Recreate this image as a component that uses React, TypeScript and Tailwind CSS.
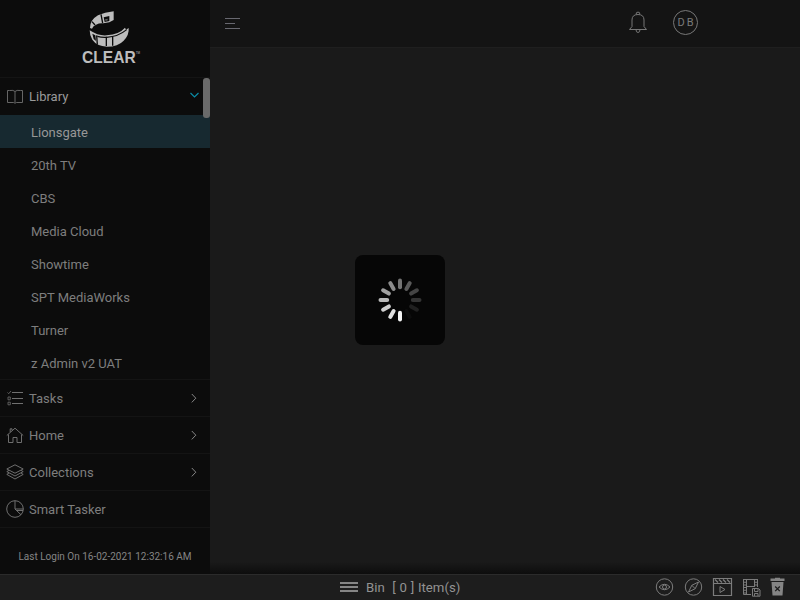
import React from 'react';

const channels = ['Lionsgate', '20th TV', 'CBS', 'Media Cloud', 'Showtime', 'SPT MediaWorks', 'Turner', 'z Admin v2 UAT'];

const spokes = ['#747474', '#5a5a5a', '#454545', '#343434', '#202020', '#0d0d0d', '#f5f5f5', '#e0e0e0', '#cecece', '#b9b9b9', '#a0a0a0', '#8b8b8b'];

function Logo() {
  return (
    <svg className="h-20 w-20" viewBox="0 0 240 240" fill="#bdbdbd">
      <path d="M131 34 Q104 37 84 46 Q60 60 60 84 L66 86 Q68 78 78 74 Q88 69 100 70 L118 67 L131 60Z" />
      <path d="M59 91 Q70 98 82 103 Q96 107 110 106 Q148 103 165 83 L168 89 L176 84 Q178 105 161 122 Q144 140 111 140 Q80 138 67 119 Q59 107 59 91Z" />
      <g fill="none" stroke="#0c0c0c" strokeWidth="4">
        <path d="M93 43 L98 69 M66 65 L75 75" />
        <path d="M80 106 L82 134 M109 110 V138 M128 110 V137" />
        <path d="M82 109 Q95 113 110 112 Q145 110 170 89" strokeWidth="3.5" />
      </g>
      <path d="M101 52 L118 48 V63 L104 66Z M67 101 L76 106 L78 123 L71 117Z" fill="#0c0c0c" />
      <path d="M105 58 L113 56 V61 L107 63Z" fill="#606060" />
      <text x="36" y="189" fontFamily="Liberation Sans, Arial, sans-serif" fontWeight="700" fontSize="47" textLength="161" lengthAdjust="spacingAndGlyphs">CLEAR</text>
      <text x="197" y="161" fontFamily="Liberation Sans, Arial, sans-serif" fontSize="9">TM</text>
    </svg>
  );
}

const iconClass = 'relative -top-px ml-1.5 h-[18px] w-[18px] shrink-0';

function BookIcon() {
  return (
    <svg className={iconClass} viewBox="0 0 18 18" fill="none" stroke="#6c6c6c">
      <path d="M9 4.5V15.5 M9 4.5Q7.5 2.8 3.5 3.5H1.5V15.5H7.5L9 16.2L10.5 15.5H16.5V3.5H14.5Q10.5 2.8 9 4.5" strokeWidth=".95" />
    </svg>
  );
}

function TasksIcon() {
  return (
    <svg className={iconClass} viewBox="0 0 18 18" fill="none" stroke="#707070">
      <path d="M6 3.5H17M6 9.5H17M6 14.5H17" strokeWidth="1.2" />
      <path d="M1.5 3.5L2.7 4.7L5 2M2 8H4.3V10.8H2ZM2 13.2H4.3V15.8H2Z" strokeWidth=".8" />
    </svg>
  );
}

function HomeIcon() {
  return (
    <svg className={iconClass} viewBox="0 0 18 18" fill="none" stroke="#747474" strokeWidth=".95">
      <path d="M.8 9.5L9 2.2L17.2 9.5 M2.5 8.5V16.5H7V11.5H11V16.5H15.5V8.5 M4.2 6V2.8H6V4.4" />
    </svg>
  );
}

function LayersIcon() {
  return (
    <svg className={iconClass} viewBox="0 0 18 18" fill="none" stroke="#747474" strokeWidth=".95" strokeLinejoin="round">
      <path d="M9 1.8L17.2 6L9 10.2L.8 6Z M3 7.4L.8 8.6L9 13L17.2 8.6L15 7.4 M3 10L.8 11.4L9 16L17.2 11.4L15 10" />
    </svg>
  );
}

function PieIcon() {
  return (
    <svg className={iconClass} viewBox="0 0 18 18" fill="none" stroke="#747474" strokeWidth=".95">
      <circle cx="9" cy="9" r="8.3" />
      <path d="M9 .8V9H17.2 M9 9L15 14.8 M11 10.5H17" />
    </svg>
  );
}

function Chevron({ open = false }: { open?: boolean }) {
  return open ? (
    <svg className="relative -top-px mr-2.5 ml-auto h-3 w-3" viewBox="0 0 12 12" fill="none" stroke="#0b8ba5" strokeWidth="1.15">
      <path d="M2.5 3L6.5 7L10.5 3" />
    </svg>
  ) : (
    <svg className="relative -top-px mr-2.5 ml-auto h-3 w-3" viewBox="0 0 12 12" fill="none" stroke="#8c8c8c" strokeWidth=".95">
      <path d="M3.8 2L7.8 6.2L3.8 10.4" />
    </svg>
  );
}

function Row({ icon, label, arrow = true }: { icon: React.ReactNode; label: string; arrow?: boolean }) {
  return (
    <li className="flex h-[37px] items-center border-b border-[#141414] pt-0.5">
      {icon}
      <span className="ml-[5px]">{label}</span>
      {arrow && <Chevron />}
    </li>
  );
}

function Sidebar() {
  return (
    <aside className="relative flex w-[210px] shrink-0 flex-col bg-[#0c0c0c] text-[13px] leading-4 text-[#7e7e7e]">
      <div className="flex h-[78px] justify-center border-b border-[#141414] pl-2.5"><Logo /></div>
      <div className="flex h-[37px] items-center text-[#9a9a9a]">
        <BookIcon />
        <span className="ml-[5px]">Library</span>
        <Chevron open />
      </div>
      <ul>
        {channels.map((name, i) => (
          <li key={name} className={`flex h-[33px] items-center pt-0.5 pl-[31px] ${i === 0 ? 'bg-[#172930] text-[#979797]' : ''}`}>{name}</li>
        ))}
      </ul>
      <ul className="border-t border-[#141414]">
        <Row icon={<TasksIcon />} label="Tasks" />
        <Row icon={<HomeIcon />} label="Home" />
        <Row icon={<LayersIcon />} label="Collections" />
        <Row icon={<PieIcon />} label="Smart Tasker" arrow={false} />
      </ul>
      <p className="pt-[21px] text-center text-[10px] text-[#858585]">Last Login On 16-02-2021 12:32:16 AM</p>
      <div className="absolute top-[78px] right-0 h-10 w-[7px] rounded-[3px] bg-[#6a6a6a]" />
    </aside>
  );
}

function Header() {
  return (
    <header className="flex h-12 border-b border-[#1f1f1f] bg-[#141414]">
      <div className="mt-[18px] ml-[15px] flex flex-col gap-1">
        <i className="h-px w-[15px] bg-[#686870]" />
        <i className="h-px w-2.5 bg-[#686870]" />
        <i className="h-px w-[15px] bg-[#686870]" />
      </div>
      <div className="mr-[102px] ml-auto flex gap-[25px]">
        <svg className="mt-2.5 h-6 w-5" viewBox="0 0 20 24" fill="none" stroke="#777" strokeWidth="1">
          <path d="M1.5 19.5H18.5L16 16.5V10Q16 4.5 10 4.5Q4 4.5 4 10V16.5L1.5 19.5ZM8.3 4.5V3Q8.3 2.2 10 2.2Q11.7 2.2 11.7 3V4.5M8 19.5Q8 22.5 10 22.5Q12 22.5 12 19.5" />
        </svg>
        <span className="mt-[9.5px] flex h-[25px] w-[25px] items-center justify-center rounded-full border border-[#777] pt-0.5 pl-0.5 text-[11px] tracking-[2px] text-[#7a7a7a]">DB</span>
      </div>
    </header>
  );
}

function Spinner() {
  return (
    <div className="absolute top-[255px] left-[355px] h-[90px] w-[90px] rounded-lg bg-[#060606]">
      <svg viewBox="0 0 90 90" strokeWidth="4" strokeLinecap="round">
        {spokes.map((color, i) => (
          <path key={color} d="M45 25.5V32.2" stroke={color} transform={`rotate(${i * 30} 45 45)`} />
        ))}
      </svg>
    </div>
  );
}

function Footer() {
  return (
    <footer className="relative flex h-[26px] items-center border-t border-[#2b2b2b] bg-[#1d1d1d] text-[13.2px] text-[#929292]">
      <div className="mb-px ml-[340px] flex w-[18px] flex-col gap-[2px]">
        <i className="h-[2px] bg-[#858585]" /><i className="h-[2px] bg-[#858585]" /><i className="h-[2px] bg-[#858585]" />
      </div>
      <span className="ml-2 [word-spacing:0.5px] whitespace-pre">Bin  [ 0 ] Item(s)</span>
      <svg className="mr-[15px] mb-px ml-auto h-5 w-[130px]" viewBox="655 577 130 20" fill="none" stroke="#7c7c7c" strokeWidth="1">
        <circle cx="664.5" cy="587" r="8.2" />
        <path d="M659 587Q664.5 581.5 670 587Q664.5 592.5 659 587Z" />
        <circle cx="664.5" cy="587" r="2" />
        <circle cx="693.5" cy="587" r="8.2" />
        <path d="M698.5 582L695.2 588.7L688.5 592L691.8 585.3ZM691.8 585.3L695.2 588.7" />
        <path d="M713.5 578.5H731.5V595.5H713.5ZM713.5 583.5H731.5" strokeWidth="1.2" />
        <path d="M715 579.5L718 582.5M719 579.5L722 582.5M723 579.5L726 582.5M727 579.5L730 582.5" strokeWidth="1.4" />
        <path d="M720 586.5V592.5L725 589.5Z" />
        <path d="M743.5 579V594.5H751M757.5 579V587M746.5 579V594M754.5 579V587M743.5 579.5H757.5M747 586.5H754" />
        <path d="M745 579V594M756 579V587" strokeWidth="2" strokeDasharray="1 1.7" />
        <path d="M752.5 588.5H758.5L760 590V596.2H752.5ZM754.5 589V591.5H758V589M754.5 596V593.5H758V596" />
        <path d="M770.5 578.5H775V577.7H780V578.5H784.5V581H770.5ZM771.5 582H783.5L782.5 595.5H772.5Z" fill="#858585" stroke="none" />
        <path d="M775.2 586.5L779.8 591.1M779.8 586.5L775.2 591.1" stroke="#1d1d1d" strokeWidth="1.3" />
      </svg>
    </footer>
  );
}

export default function App() {
  return (
    <div className="relative flex h-[600px] w-[800px] flex-col overflow-hidden bg-[#1a1a1a] font-['Roboto',sans-serif]">
      <div className="flex min-h-0 flex-1">
        <Sidebar />
        <main className="flex flex-1 flex-col">
          <Header />
          <div className="mt-auto h-3 bg-linear-to-b from-[#1a1a1a] to-[#0d0d0d]" />
        </main>
      </div>
      <Footer />
      <Spinner />
    </div>
  );
}
